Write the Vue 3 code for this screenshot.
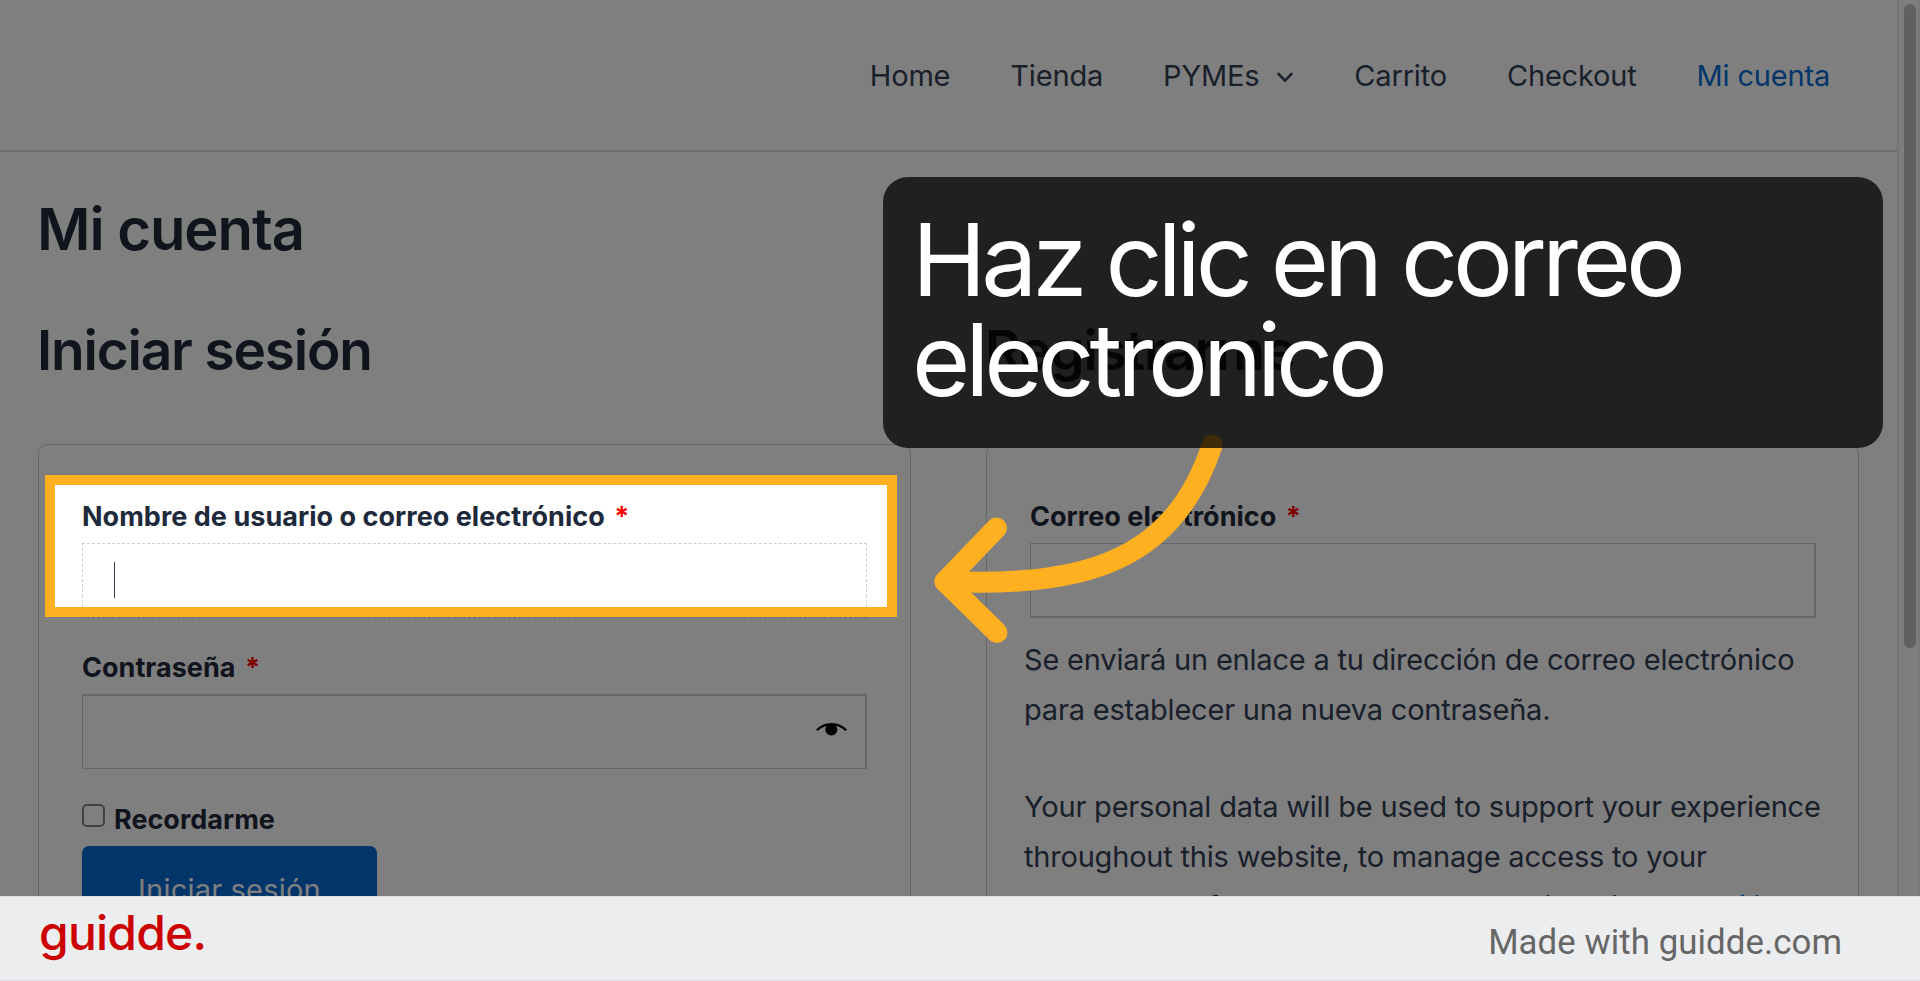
<script setup>
import { ref } from 'vue'

const menu = [
  { label: 'Home' },
  { label: 'Tienda' },
  { label: 'PYMEs', children: true },
  { label: 'Carrito' },
  { label: 'Checkout' },
  { label: 'Mi cuenta', active: true }
]

const username = ref('')
const password = ref('')
const email = ref('')
const remember = ref(false)
</script>

<template>
  <div class="capture">
    <div class="stage">
      <div class="site">
        <header class="site-header">
          <nav class="menu">
            <a
              v-for="item in menu"
              :key="item.label"
              class="menu-item"
              :class="{ 'is-active': item.active }"
            >
              {{ item.label }}
              <svg v-if="item.children" class="chevron" viewBox="0 0 18 12">
                <path d="M1.8 2.2 9 9.6l7.2-7.4" />
              </svg>
            </a>
          </nav>
        </header>

        <main class="account">
          <h1>Mi cuenta</h1>
          <div class="columns">
            <section class="column">
              <h2>Iniciar sesión</h2>
              <form class="card" @submit.prevent>
                <div class="field">
                  <label>Nombre de usuario o correo electrónico <span class="required">*</span></label>
                  <div class="control is-focused">
                    <input v-model="username" type="text">
                    <i class="caret" />
                  </div>
                </div>
                <div class="field">
                  <label>Contraseña <span class="required">*</span></label>
                  <div class="control is-password">
                    <input v-model="password" type="password">
                    <svg class="eye" viewBox="0 0 31 15">
                      <path class="lid" d="M.8 9.200C9.500 1 21.500 1 30.200 9.200" />
                      <circle cx="15.300" cy="8.400" r="6" />
                    </svg>
                  </div>
                </div>
                <label class="remember">
                  <input v-model="remember" type="checkbox">
                  <span>Recordarme</span>
                </label>
                <button class="submit" type="submit">Iniciar sesión</button>
              </form>
            </section>

            <section class="column">
              <h2>Registrarme</h2>
              <form class="card register" @submit.prevent>
                <div class="field">
                  <label>Correo electrónico <span class="required">*</span></label>
                  <div class="control is-email">
                    <input v-model="email" type="email">
                  </div>
                </div>
                <p>Se enviará un enlace a tu dirección de correo electrónico<br>para establecer una nueva contraseña.</p>
                <p>
                  Your personal data will be used to support your experience<br>throughout this website, to manage access to your<br>account, and for other purposes described in our <a>política de</a>
                </p>
              </form>
            </section>
          </div>
        </main>
      </div>

      <div class="scrollbar"><div class="thumb" /></div>

      <div class="spotlight" />
      <svg class="arrow" viewBox="0 0 300 220">
        <path d="M287 15.500C248 133 158 157 20 151.500" />
        <path d="M71.500 98 20 151.500l52 51" />
      </svg>
      <div class="tooltip">Haz clic en correo electronico</div>
    </div>

    <footer class="brand">
      <span class="logo">guidde.</span>
      <span class="credit">Made with guidde.com</span>
    </footer>
  </div>
</template>

<style>
body {
  margin: 0;
  overflow: hidden;
}
</style>

<style scoped>
.capture {
  width: 1920px;
  height: 981px;
  display: flex;
  flex-direction: column;
  font-family: Inter, "Liberation Sans", sans-serif;
  color: #334155;
}
.stage {
  position: relative;
  display: flex;
  height: 896px;
  overflow: hidden;
  background: #fff;
}
.site {
  flex: 1;
  min-width: 0;
}

/* header */
.site-header {
  box-sizing: border-box;
  height: 152px;
  padding-right: 67px;
  border-bottom: 2px solid #d9dbe0;
}
.menu {
  display: flex;
  justify-content: flex-end;
  gap: 60px;
  height: 150px;
}
.menu-item {
  display: flex;
  align-items: center;
  font-size: 29px;
  letter-spacing: -0.18px;
}
.menu-item.is-active {
  color: #046bd2;
}
.chevron {
  width: 18px;
  height: 12px;
  margin: 3px 0 0 17px;
  fill: none;
  stroke: #334155;
  stroke-width: 2.6;
}

/* account page */
.account {
  padding: 42px 38px 0;
}
h1,
h2 {
  margin: 0 0 0 -1px;
  line-height: 70px;
  font-weight: 600;
  color: #1e293b;
  white-space: nowrap;
}
h1 {
  margin-bottom: 51px;
  font-size: 58px;
  letter-spacing: -1.05px;
}
h2 {
  margin-bottom: 59px;
  font-size: 55px;
  letter-spacing: -1.2px;
}
.columns {
  display: grid;
  grid-template-columns: 873px 873px;
  gap: 75px;
}
.card {
  box-sizing: border-box;
  height: 620px;
  padding: 52px 43px 0;
  border: 1px solid #cdcfd5;
  border-radius: 9px;
}
.field {
  margin-bottom: 30px;
}
.field label {
  display: block;
  line-height: 40px;
  margin-bottom: 6px;
  font-size: 27px;
  font-weight: 700;
  letter-spacing: 0.03px;
  color: #1e293b;
}
.required {
  margin-left: 3px;
  color: #f00;
}
.control {
  position: relative;
  box-sizing: border-box;
  display: flex;
  align-items: center;
  height: 75px;
  border: 1px solid #cdcfd4;
}
.control input {
  flex: 1;
  min-width: 0;
  padding: 0 32px;
  border: 0;
  outline: 0;
  background: none;
  font: inherit;
}
.control.is-focused {
  border-style: dashed;
  border-color: #ccced8;
}
.control.is-password {
  border-top-width: 2px;
  border-right-width: 2px;
}
.control.is-email {
  margin-right: -1px;
  border-right-width: 2px;
  border-bottom-width: 2px;
}
.caret {
  position: absolute;
  left: 31px;
  top: 18px;
  width: 1px;
  height: 36px;
  background: #334155;
}
.eye {
  width: 31px;
  height: 15px;
  margin: -8px 18px 0 0;
}
.eye .lid {
  fill: none;
  stroke: #000;
  stroke-width: 2.2;
}
.remember {
  display: flex;
  align-items: center;
  height: 40px;
  margin-bottom: 7px;
  font-size: 27px;
  font-weight: 700;
  color: #1e293b;
}
.remember input {
  appearance: none;
  box-sizing: border-box;
  width: 23px;
  height: 23px;
  margin: -7px 9px 0 0;
  border: 2px solid #858585;
  border-radius: 5px;
}
.submit {
  width: 295px;
  height: 90px;
  padding: 0 0 4px;
  border: 0;
  border-radius: 7px;
  background: #046bd2;
  color: #fff;
  font: 400 29px Inter, "Liberation Sans", sans-serif;
  letter-spacing: 0.2px;
}
.register .field {
  margin-bottom: 17px;
}
.register p {
  margin: 0 -20px 48px -6px;
  font-size: 29px;
  line-height: 49.65px;
  letter-spacing: -0.2px;
  white-space: nowrap;
}
.register a {
  color: #046bd2;
}

/* browser scrollbar */
.scrollbar {
  box-sizing: border-box;
  width: 23px;
  padding: 4px 0 0 5px;
  border-left: 2px solid #ececec;
  border-right: 2px solid #f2f2f2;
  background: #fcfcfc;
}
.thumb {
  width: 12px;
  height: 644px;
  border-radius: 6px;
  background: #c1c1c1;
}

/* guide overlay */
.spotlight {
  position: absolute;
  left: 45px;
  top: 475px;
  box-sizing: border-box;
  width: 852px;
  height: 142px;
  border: 10px solid #ffb020;
  box-shadow: 0 0 0 2000px rgba(0, 0, 0, 0.5);
}
.arrow {
  position: absolute;
  left: 925px;
  top: 430px;
  width: 300px;
  height: 220px;
  fill: none;
  stroke: #ffb020;
  stroke-width: 21;
  stroke-linecap: round;
  stroke-linejoin: round;
}
.tooltip {
  position: absolute;
  left: 883px;
  top: 177px;
  box-sizing: border-box;
  width: 1000px;
  height: 271px;
  padding: 33px 150px 0 29px;
  border-radius: 25px;
  background: rgba(0, 0, 0, 0.75);
  color: #fff;
  font-size: 100px;
  line-height: 100px;
  letter-spacing: -5.1px;
}

.brand {
  box-sizing: border-box;
  display: flex;
  justify-content: space-between;
  height: 85px;
  padding: 0 78px 0 39px;
  border-top: 1px solid #dfe0e2;
  border-bottom: 1px solid #dddee1;
  background: #ecedef;
}
.logo {
  color: #c00;
  font-size: 48px;
  font-weight: 500;
  line-height: 72px;
  letter-spacing: -0.8px;
}
.credit {
  color: #666;
  font-family: Roboto, "Liberation Sans", sans-serif;
  font-size: 34.8px;
  line-height: 90px;
  letter-spacing: 0.07px;
}
</style>
